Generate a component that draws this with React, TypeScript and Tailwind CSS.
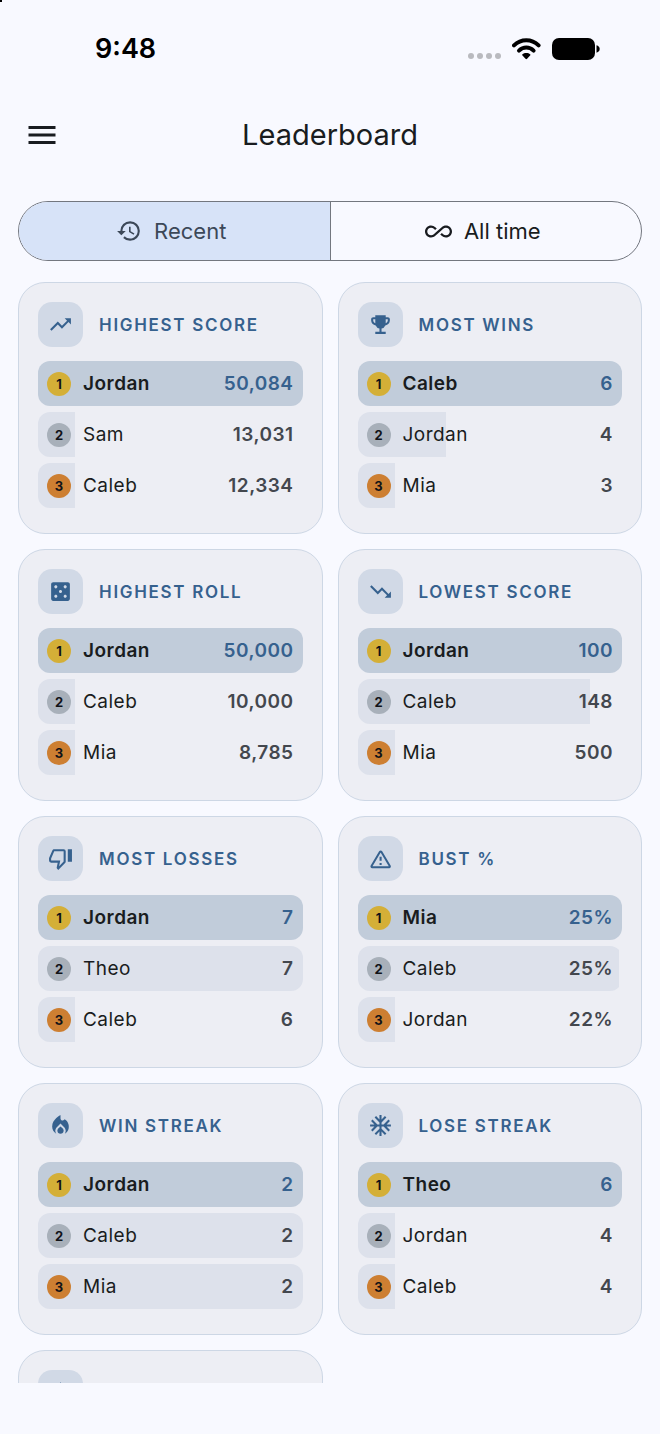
import clsx from "clsx";
import React, { useState } from "react";
import {
  MdAcUnit,
  MdAllInclusive,
  MdCasino,
  MdEmojiEvents,
  MdHistory,
  MdLocalFireDepartment,
  MdMenu,
  MdStar,
  MdTrendingDown,
  MdTrendingUp,
} from "react-icons/md";

type Entry = {
  name: string;
  value: string;
  // width of the bar behind the row, in percent
  fill: number;
};

type Board = {
  id: string;
  title?: string;
  icon: React.ComponentType<{ size?: number }>;
  entries: Entry[];
};

const ThumbDownIcon = ({ size = 24 }: { size?: number }) => (
  <svg width={size} height={size} viewBox="0 0 24 24" fill="currentColor">
    <path d="M19 15V3h4v12h-4M15 3a2 2 0 0 1 2 2v10c0 .55-.22 1.05-.59 1.41L9.83 23l-1.06-1.06c-.27-.27-.44-.64-.44-1.06l.03-.31.95-4.57H3a2 2 0 0 1-2-2v-2c0-.26.05-.5.14-.73l3.02-7.05C4.46 3.5 5.17 3 6 3h9m0 2H5.97L3 12v2h8.78l-1.13 5.32L15 14.97V5z" />
  </svg>
);

const WarningIcon = ({ size = 24 }: { size?: number }) => (
  <svg width={size} height={size} viewBox="0 0 24 24" fill="none">
    <path
      d="M11.5 5.6c.3-.5 1-.5 1.3 0l8.1 13.7c.3.5 0 1.1-.6 1.1H4c-.6 0-.9-.6-.6-1.1z"
      stroke="currentColor"
      strokeWidth="1.9"
      strokeLinejoin="round"
    />
    <path
      d="M12.1 10.2v4M12.1 16.3v2"
      stroke="currentColor"
      strokeWidth="2"
    />
  </svg>
);

const boards: Board[] = [
  {
    id: "highest-score",
    title: "HIGHEST SCORE",
    icon: MdTrendingUp,
    entries: [
      { name: "Jordan", value: "50,084", fill: 100 },
      { name: "Sam", value: "13,031", fill: 14 },
      { name: "Caleb", value: "12,334", fill: 14 },
    ],
  },
  {
    id: "most-wins",
    title: "MOST WINS",
    icon: MdEmojiEvents,
    entries: [
      { name: "Caleb", value: "6", fill: 100 },
      { name: "Jordan", value: "4", fill: 33.4 },
      { name: "Mia", value: "3", fill: 14 },
    ],
  },
  {
    id: "highest-roll",
    title: "HIGHEST ROLL",
    icon: MdCasino,
    entries: [
      { name: "Jordan", value: "50,000", fill: 100 },
      { name: "Caleb", value: "10,000", fill: 14 },
      { name: "Mia", value: "8,785", fill: 14 },
    ],
  },
  {
    id: "lowest-score",
    title: "LOWEST SCORE",
    icon: MdTrendingDown,
    entries: [
      { name: "Jordan", value: "100", fill: 100 },
      { name: "Caleb", value: "148", fill: 88 },
      { name: "Mia", value: "500", fill: 14 },
    ],
  },
  {
    id: "most-losses",
    title: "MOST LOSSES",
    icon: ThumbDownIcon,
    entries: [
      { name: "Jordan", value: "7", fill: 100 },
      { name: "Theo", value: "7", fill: 100 },
      { name: "Caleb", value: "6", fill: 14 },
    ],
  },
  {
    id: "bust",
    title: "BUST %",
    icon: WarningIcon,
    entries: [
      { name: "Mia", value: "25%", fill: 100 },
      { name: "Caleb", value: "25%", fill: 98.8 },
      { name: "Jordan", value: "22%", fill: 14 },
    ],
  },
  {
    id: "win-streak",
    title: "WIN STREAK",
    icon: MdLocalFireDepartment,
    entries: [
      { name: "Jordan", value: "2", fill: 100 },
      { name: "Caleb", value: "2", fill: 100 },
      { name: "Mia", value: "2", fill: 100 },
    ],
  },
  {
    id: "lose-streak",
    title: "LOSE STREAK",
    icon: MdAcUnit,
    entries: [
      { name: "Theo", value: "6", fill: 100 },
      { name: "Jordan", value: "4", fill: 14 },
      { name: "Caleb", value: "4", fill: 14 },
    ],
  },
  { id: "starred", icon: MdStar, entries: [] },
];

const medals = ["bg-[#d4af37]", "bg-[#a8b0ba]", "bg-[#cd7f32]"];

const StatusBar = () => (
  <div className="flex h-[93px] shrink-0 items-center justify-between pt-[5px] pr-[60px] pl-[95px] text-black">
    <span className="text-[27px] leading-8 font-semibold">9:48</span>
    <div className="flex items-center gap-[10px]">
      <svg width="34" height="22" viewBox="0 0 34 22" fill="#b9babf">
        <circle cx="3" cy="18" r="3" />
        <circle cx="12" cy="18" r="3" />
        <circle cx="21" cy="18" r="3" />
        <circle cx="30" cy="18" r="3" />
      </svg>
      <svg width="30" height="22" viewBox="0 0 30 22" fill="none">
        <path
          d="M2 7.3C9 0.4 19.6 0.4 26.6 7.3"
          stroke="currentColor"
          strokeWidth="4"
          strokeLinecap="round"
        />
        <path
          d="M7 12.6C11.2 8.6 17.4 8.6 21.6 12.6"
          stroke="currentColor"
          strokeWidth="4"
          strokeLinecap="round"
        />
        <path
          d="M14.3 14.9c1.6 0 2.9.5 3.8 1.3.5.4.4 1 0 1.4l-3 3.2c-.5.5-1.1.5-1.6 0l-3-3.2c-.4-.4-.5-1 0-1.4.9-.8 2.2-1.3 3.8-1.3z"
          fill="currentColor"
        />
      </svg>
      <svg width="48" height="22" viewBox="0 0 48 22" fill="currentColor">
        <rect x="0" y="0" width="43" height="22" rx="7" />
        <path d="M44.5 7.3c2.1.6 3.2 2 3.2 3.7s-1.1 3.1-3.2 3.7z" />
      </svg>
    </div>
  </div>
);

const Row = ({ entry, index }: { entry: Entry; index: number }) => {
  const first = index === 0;
  return (
    <li className="relative flex h-[45px] items-center gap-3 overflow-hidden rounded-xl px-[9px]">
      {/* bar behind the text */}
      <div
        className={clsx(
          "absolute inset-y-0 left-0",
          first ? "bg-[#c1ccda]" : "bg-[#dde1eb]"
        )}
        style={{ width: `${entry.fill}%` }}
      />
      <span
        className={clsx(
          "relative flex size-6 items-center justify-center rounded-full text-[13px] leading-4 font-bold text-[#111318]",
          medals[index]
        )}
      >
        {index + 1}
      </span>
      <span
        className={clsx(
          "relative flex-1 text-[19px] leading-6 tracking-wide text-[#191c20]",
          first ? "font-semibold" : "font-normal"
        )}
      >
        {entry.name}
      </span>
      <span
        className={clsx(
          "relative text-[19px] leading-6 font-semibold tracking-wide",
          first ? "text-[#36618e]" : "text-[#43474e]"
        )}
      >
        {entry.value}
      </span>
    </li>
  );
};

const BoardCard = ({ board }: { board: Board }) => {
  const Icon = board.icon;
  return (
    <section className="min-h-[252px] rounded-[27px] border border-[#cdd7e5] bg-[#edeef4] px-[19px] pt-[19px] pb-6">
      <div className="flex items-center gap-4">
        <div className="flex size-[45px] items-center justify-center rounded-[14px] bg-[#d1d9e6] text-[#36618e]">
          <Icon size={25} />
        </div>
        {board.title && (
          <h2 className="text-[17px] leading-6 font-semibold tracking-widest text-[#36618e]">
            {board.title}
          </h2>
        )}
      </div>
      <ol className="mt-[14px] flex flex-col gap-[6px]">
        {board.entries.map((entry, index) => (
          <Row key={entry.name} entry={entry} index={index} />
        ))}
      </ol>
    </section>
  );
};

const App = () => {
  const [range, setRange] = useState<"recent" | "all">("recent");

  const segment = (active: boolean) =>
    clsx(
      "flex flex-1 items-center justify-center gap-3 pr-1.5 text-[22px] leading-7",
      active ? "bg-[#d7e3f8] text-[#3c4858]" : "text-[#191c20]"
    );

  return (
    <div className="relative flex h-screen flex-col bg-[#f8f9ff] pb-[51px] font-[Inter,sans-serif]">
      <div className="absolute top-0 left-0 size-[2px] bg-black" />
      <StatusBar />

      <header className="grid h-[84px] shrink-0 grid-cols-[1fr_auto_1fr] items-center px-6">
        <button type="button" aria-label="Menu" className="w-9 text-[#191c20]">
          <MdMenu size={36} />
        </button>
        <h1 className="text-[29px] leading-10 text-[#191c20]">Leaderboard</h1>
      </header>

      <div className="mx-[18px] mt-6 flex h-[60px] shrink-0 overflow-hidden rounded-full border border-[#73777f]">
        <button
          type="button"
          aria-pressed={range === "recent"}
          className={segment(range === "recent")}
          onClick={() => setRange("recent")}
        >
          <MdHistory size={26} />
          Recent
        </button>
        <div className="w-px bg-[#73777f]" />
        <button
          type="button"
          aria-pressed={range === "all"}
          className={segment(range === "all")}
          onClick={() => setRange("all")}
        >
          <MdAllInclusive size={27} />
          All time
        </button>
      </div>

      <main className="mt-[21px] grid min-h-0 flex-1 grid-cols-2 content-start gap-[15px] overflow-y-auto px-[18px] [scrollbar-width:none]">
        {boards.map((board) => (
          <BoardCard key={board.id} board={board} />
        ))}
      </main>
    </div>
  );
};

export default App;
